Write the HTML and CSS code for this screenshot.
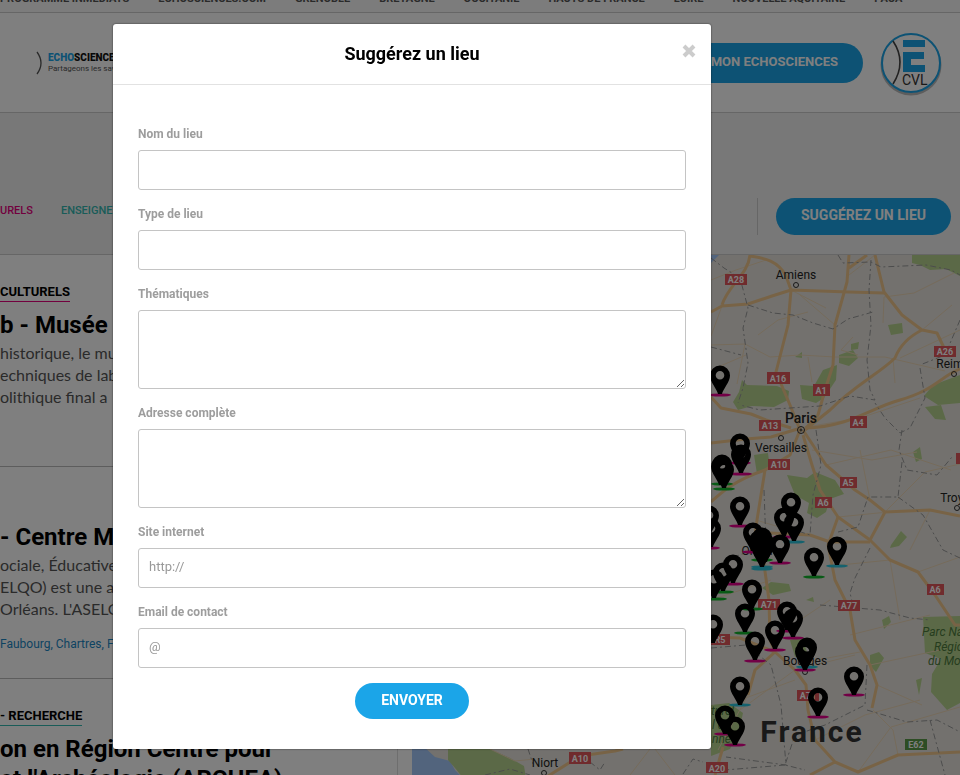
FILE: index.html
```
<!DOCTYPE html>
<html lang="fr">
<head>
    <meta charset="UTF-8">
    <meta name="viewport" content="width=device-width, initial-scale=1.0">
    <title>Echosciences - Suggérez un lieu</title>
    <link rel="stylesheet" href="styles.css">
</head>
<body>
    <div class="page">
        <nav class="topbar">
            <a href="#">PROGRAMME INMEDIATS</a>
            <a href="#">ECHOSCIENCES.COM</a>
            <a href="#">GRENOBLE</a>
            <a href="#">BRETAGNE</a>
            <a href="#">OCCITANIE</a>
            <a href="#">HAUTS DE FRANCE</a>
            <a href="#">LOIRE</a>
            <a href="#">NOUVELLE AQUITAINE</a>
            <a href="#">PACA</a>
        </nav>

        <header class="header">
            <a href="#" class="logo">
                <svg width="6" height="24" viewBox="0 0 6 24"><path d="M1 1Q9 12 1 23" fill="none" stroke="#555" stroke-width="1.3"/></svg>
                <span class="logo-text">
                    <strong><em>ECHO</em>SCIENCES</strong>
                    <small>Partageons les savoirs</small>
                </span>
            </a>
            <div class="header-actions">
                <button class="btn btn-account">MON ECHOSCIENCES</button>
                <svg class="badge-cvl" width="64" height="66" viewBox="0 0 64 66">
                    <circle cx="32" cy="35" r="29" fill="none" stroke="#777" stroke-width="3" opacity=".5"/>
                    <circle cx="32" cy="33" r="29" fill="#fff" stroke="#1ba5e8" stroke-width="2"/>
                    <path d="M14 11Q28 32 14 54" fill="none" stroke="#444" stroke-width="1.6"/>
                    <path d="M24 10h22v7H24zM24 22h21v7H32v6h14v7H24z" fill="#1ba5e8"/>
                    <text x="23" y="55" class="cvl">CVL</text>
                </svg>
            </div>
        </header>

        <div class="filters">
            <div class="filter-links">
                <a href="#" class="pink">URELS</a>
                <a href="#" class="teal">ENSEIGNEMENT</a>
            </div>
            <div class="filter-action">
                <button class="btn btn-suggest">SUGGÉREZ UN LIEU</button>
            </div>
        </div>

        <main class="content">
            <div class="list">
                <article class="place">
                    <a href="#" class="category pink-line">CULTURELS</a>
                    <h2>b - Musée d</h2>
                    <p>historique, le mu<br>echniques de lab<br>olithique final a</p>
                </article>
                <article class="place place-located">
                    <h2>- Centre Ma</h2>
                    <p>ociale, Éducative<br>ELQO) est une as<br>Orléans. L'ASELQ</p>
                    <a href="#" class="location">Faubourg, Chartres, F</a>
                </article>
                <article class="place">
                    <a href="#" class="category teal-line">- RECHERCHE</a>
                    <h2>on en Région Centre pour<br>et l'Archéologie (ARCHEA)</h2>
                </article>
            </div>
            <div class="map">
                <svg viewBox="412 255 548 520" preserveAspectRatio="xMinYMin slice">
                    <defs>
                        <path id="pin" fill-rule="evenodd" d="M-2 0C-3-5-10-12-10-18.5A10 10 0 0 1 10-18.5C10-12 3-5 2 0ZM0-23a4.3 4.3 0 1 0 0 8.6a4.3 4.3 0 1 0 0-8.6Z"/>
                        <ellipse id="dot" rx="11" ry="1.6"/>
                    </defs>

                    <rect x="412" y="255" width="548" height="520" fill="#e6e3dd"/>

                    <g class="water">
                        <path d="M412 745h10l13 12 15 4 5 9 8 8h-51z"/>
                        <path d="M711 255h8l-8 8z"/>
                    </g>

                    <g class="park">
                        <path d="M448 749h42l20 9 14 8 2 12h-63l-8-10-7-8z"/>
                        <path d="M912 255h48v21l-14-7-16 1-10-5-8-2z"/>
                        <path d="M739 392l3-12 5 5 30 1 12 5-1 9-14 7-22-1-14 4-5-8z"/>
                        <path d="M800 385l14 1 9-16 14-5-1 15-12 18-8 5-14-4z"/>
                        <path d="M839 355l14-5 5 8-9 8-10-3zM851 344l8-2-1 7-7 1zM795 357l7-5v6z"/>
                        <path d="M933 385l27-10v28l-22 2-14-9zM925 407l16-2 5 15-11-1z"/>
                        <path d="M754 455l14-2 2 16-13 5zM787 475l20 3 8-6 20 8 9 14-14 5-4 13-9 6-10-5 2-10-14-8z"/>
                        <path d="M913 452l7-5 2 12-6 3zM888 325l14-2 1 10-12 2z"/>
                        <path d="M891 545l10-14 6 6-8 9-9 2zM762 588l9-6 18 2 2 7-18 4zM790 640l12-3 5 15-12 5z"/>
                        <path d="M923 617l37-1v87l-13 7-16-18 1-18 9-15-16-6z"/>
                        <path d="M711 705l18-2 14 10-4 18-9 18-19 7z"/>
                        <path d="M870 655l9-3 5 6-8 14-6-6zM882 620l7-4 2 6-7 7zM916 680l6-2-3 17zM806 600l7-3 1 5z"/>
                    </g>

                    <g class="lanes">
                        <path d="M711 345l34-1 25 13 30-2 35 2h50l60 14"/>
                        <path d="M722 306l-11 30M758 335l20-15 30-8M835 325l-35-30M884 297l-1 26M922 330l30-25M791 290l35 18M711 280l25-10 30-10M849 275l26-20M884 297l30-4 40-20"/>
                        <path d="M745 344l-8 40M808 357l4 25M893 358l2 25M858 355l-17-5 12-13M900 358l60-28M711 370l35-15"/>
                        <path d="M800 428l60-10 60-20M812 450l60 10 45-8M826 465l65-15 60 20M870 500l-10-50M885 512l40-40 35-8"/>
                        <path d="M756 520l50 15M740 480l-29 20M838 517l50-5M890 560l-50 5M918 572l42-15M890 560l10 60M930 510l-20 40"/>
                        <path d="M711 600l60-20M770 640l60-40M795 670l60-15M806 662l54-10M740 700l55-20M795 670l-55 40M815 740l50-25 55-15M748 695l-30 55"/>
                        <path d="M870 665l70-15M877 685l45 20M858 772l33-45 69-20M898 755l-5-25-20-20M930 615l-80 20"/>
                        <path d="M630 775l20-26M655 749l20 26M490 749l25 12 20-2"/>
                    </g>

                    <g class="roads">
                        <path d="M750 255c-2 20-22 30-28 50M711 312l11-6 26-2 24-8 19-6 58 2 35 1"/>
                        <path d="M750 256c15 2 28 5 36 20l5 14-3 35-12 47 14 33 10 25"/>
                        <path d="M849 255l-2 27-12 43-2 40-8 25-7 25-12 13M849 268l18-13"/>
                        <path d="M875 255l9 37 18 23 20 15 15 3 8 17M922 330q-20 10-27 28c-15 15-40 27-65 52l-25 20"/>
                        <path d="M960 369c-20 8-25 21-60 31-30 8-50 27-95 28M711 397l10 11 30 6 15 6 25 8"/>
                        <path d="M711 443l35-4 25-2 30-9M711 502c11-10 24-22 54-32l25-15 10-25M765 470l-8 50-4 30"/>
                        <path d="M803 435l9 30 8 25 18 27 32 23 20 20 28 12 17 23 10 15 10 15h10"/>
                        <path d="M803 430l23 35 29 25 15 10 15 12 45-2 30 6M885 512l-15 28M838 517l-10 28 7 35 15 30 5 30 15 25 7 20-5 23"/>
                        <path d="M770 533l40 2 20 7h40M762 550l7 50 1 40 5 12 20 18 11 15 2 25 7 30 20 22 23 10 40-17 62-3"/>
                        <path d="M775 652l-20 18-7 25M711 637l29 1 35 14M715 775l8-28M545 778l35-22 35-5 8-2M835 762l-25 13"/>
                    </g>

                    <g class="borders">
                        <path d="M711 258l13 10 16 10 8 30-5 20 5 35-3 15-2 10-5 15M748 305l25 8 20 2 20 8 20 6 15-10 25-7M838 255l5 8 28-1 10 5 45-2 25 5 9 5"/>
                        <path d="M871 260l-2 30 2 35-4 35 3 30 5 10-25-4-30 10-60 4-20-5M711 347l30 8M920 368l5 30-15 30-10 5-15-15-10-15M960 320l-15 35-25 10"/>
                        <path d="M902 430l-3 20 8 20 30 5 15-18M902 462l-4 35-30 0-10 30-20 5M898 497l25 18 20 35 17 8M816 430l5 35-8 30-3 40-30-10M764 490l2 55-40 15"/>
                        <path d="M870 548l-15 30-5 15 5 20M711 648l35-3 25 20 10 40 5 60-60-8M820 605l60 5 30 8 20 2M867 665l-2 40-40 20-30 10-10 30 20 5M867 710l40 12 30-2 25 13M785 765l-60 5M930 720l15 55"/>
                        <path d="M485 775l25-6 20 6M528 749l5 15M590 762l10 8 5-8M683 774l10-15 10 3"/>
                    </g>

                    <g class="shields">
                        <rect x="725" y="274" width="22" height="11"/><text x="736" y="283">A28</text>
                        <rect x="934" y="346" width="22" height="11"/><text x="945" y="355">A26</text>
                        <rect x="767" y="372" width="23" height="12"/><text x="778" y="382">A16</text>
                        <rect x="813" y="384" width="17" height="12"/><text x="821" y="394">A1</text>
                        <rect x="759" y="420" width="22" height="11"/><text x="770" y="429">A13</text>
                        <rect x="850" y="416" width="17" height="12"/><text x="858" y="426">A4</text>
                        <rect x="768" y="459" width="22" height="11"/><text x="779" y="468">A10</text>
                        <rect x="840" y="477" width="17" height="11"/><text x="848" y="486">A5</text>
                        <rect x="815" y="497" width="17" height="11"/><text x="823" y="506">A6</text>
                        <rect x="927" y="584" width="17" height="11"/><text x="935" y="593">A6</text>
                        <rect x="758" y="599" width="22" height="11"/><text x="769" y="608">A71</text>
                        <rect x="838" y="600" width="22" height="11"/><text x="849" y="609">A77</text>
                        <rect x="708" y="634" width="22" height="11"/><text x="720" y="643">R5</text>
                        <rect x="797" y="690" width="22" height="11"/><text x="808" y="699">A71</text>
                        <rect x="706" y="762" width="22" height="11"/><text x="717" y="772">A20</text>
                        <rect x="569" y="752" width="22" height="12"/><text x="580" y="762">A10</text>
                        <rect x="956" y="453" width="17" height="11"/>
                        <rect x="905" y="739" width="22" height="11" class="euro"/><text x="916" y="748">E62</text>
                    </g>

                    <g class="towns">
                        <circle cx="796" cy="285" r="2.5"/><text x="796" y="279">Amiens</text>
                        <circle cx="954" cy="374" r="2.5"/><text x="953" y="368">Reims</text>
                        <circle cx="781" cy="438" r="2.5"/><text x="781" y="452">Versailles</text>
                        <circle cx="957" cy="508" r="2.5"/><text x="958" y="502">Troyes</text>
                        <circle cx="805" cy="672" r="2.5"/><text x="805" y="665">Bourges</text>
                        <circle cx="544" cy="773" r="2.5"/><text x="545" y="767">Niort</text>
                        <text x="762" y="555">Orléans</text>
                        <circle cx="801" cy="430" r="3.5"/><circle cx="801" cy="430" r="1"/>
                        <text x="801" y="423" class="capital">Paris</text>
                        <text x="812" y="742" class="country">France</text>
                    </g>
                    <g class="park-names">
                        <text x="922" y="636">Parc Naturel</text>
                        <text x="934" y="651">Régional</text>
                        <text x="928" y="665">du Morvan</text>
                        <text x="711" y="715">turel</text>
                        <text x="712" y="729">l de</text>
                        <text x="712" y="743">nne</text>
                    </g>

                    <g class="pink-dot">
                        <use href="#dot" x="720" y="395"/><use href="#dot" x="740" y="463"/><use href="#dot" x="741" y="474"/>
                        <use href="#dot" x="740" y="526"/><use href="#dot" x="784" y="537"/><use href="#dot" x="753" y="552"/>
                        <use href="#dot" x="780" y="563"/><use href="#dot" x="733" y="584"/><use href="#dot" x="709" y="548"/>
                        <use href="#dot" x="787" y="631"/><use href="#dot" x="793" y="638"/><use href="#dot" x="775" y="650"/>
                        <use href="#dot" x="755" y="661"/><use href="#dot" x="805" y="670"/><use href="#dot" x="854" y="695"/>
                        <use href="#dot" x="818" y="717"/><use href="#dot" x="725" y="734"/><use href="#dot" x="735" y="745"/>
                    </g>
                    <g class="green-dot">
                        <use href="#dot" x="722" y="484"/><use href="#dot" x="724" y="489"/><use href="#dot" x="762" y="560"/>
                        <use href="#dot" x="814" y="577"/><use href="#dot" x="723" y="592"/><use href="#dot" x="716" y="599"/>
                        <use href="#dot" x="752" y="609"/><use href="#dot" x="745" y="633"/>
                    </g>
                    <g class="cyan-dot">
                        <use href="#dot" x="794" y="542"/><use href="#dot" x="837" y="566"/><use href="#dot" x="762" y="567"/>
                        <use href="#dot" x="762" y="569"/><use href="#dot" x="807" y="667"/><use href="#dot" x="740" y="705"/>
                    </g>
                    <g class="pins">
                        <use href="#pin" x="720" y="394"/><use href="#pin" x="740" y="462"/><use href="#pin" x="741" y="473"/>
                        <use href="#pin" x="722" y="483"/><use href="#pin" x="724" y="488"/><use href="#pin" x="721" y="485"/>
                        <use href="#pin" x="740" y="525"/><use href="#pin" x="791" y="521"/><use href="#pin" x="784" y="536"/>
                        <use href="#pin" x="794" y="541"/><use href="#pin" x="753" y="551"/><use href="#pin" x="762" y="556"/>
                        <use href="#pin" x="759" y="559"/><use href="#pin" x="765" y="562"/><use href="#pin" x="762" y="567"/>
                        <use href="#pin" x="780" y="563"/><use href="#pin" x="814" y="576"/><use href="#pin" x="837" y="565"/>
                        <use href="#pin" x="733" y="583"/><use href="#pin" x="723" y="591"/><use href="#pin" x="714" y="598"/>
                        <use href="#pin" x="709" y="534"/><use href="#pin" x="711" y="547"/><use href="#pin" x="752" y="608"/>
                        <use href="#pin" x="745" y="632"/><use href="#pin" x="787" y="630"/><use href="#pin" x="793" y="637"/>
                        <use href="#pin" x="775" y="649"/><use href="#pin" x="755" y="660"/><use href="#pin" x="713" y="643"/>
                        <use href="#pin" x="807" y="666"/><use href="#pin" x="805" y="670"/><use href="#pin" x="854" y="695"/>
                        <use href="#pin" x="740" y="705"/><use href="#pin" x="818" y="716"/><use href="#pin" x="725" y="734"/>
                        <use href="#pin" x="735" y="745"/>
                    </g>
                </svg>
            </div>
        </main>
    </div>

    <div class="overlay">
        <div class="modal" role="dialog" aria-labelledby="modal-title">
            <div class="modal-header">
                <h1 id="modal-title">Suggérez un lieu</h1>
                <button class="close" aria-label="Fermer">
                    <svg width="14" height="14" viewBox="0 0 14 14"><path d="M2 2l10 10M12 2l-10 10" stroke="#ccc" stroke-width="4"/></svg>
                </button>
            </div>
            <form class="modal-body">
                <div class="form-group">
                    <label for="name">Nom du lieu</label>
                    <input type="text" id="name">
                </div>
                <div class="form-group">
                    <label for="type">Type de lieu</label>
                    <input type="text" id="type">
                </div>
                <div class="form-group">
                    <label for="themes">Thématiques</label>
                    <textarea id="themes"></textarea>
                </div>
                <div class="form-group">
                    <label for="address">Adresse complète</label>
                    <textarea id="address"></textarea>
                </div>
                <div class="form-group">
                    <label for="website">Site internet</label>
                    <input type="text" id="website" placeholder="http://">
                </div>
                <div class="form-group">
                    <label for="email">Email de contact</label>
                    <input type="text" id="email" placeholder="@">
                </div>
                <button type="submit" class="btn btn-send">ENVOYER</button>
            </form>
        </div>
    </div>
</body>
</html>
```
FILE: styles.css
```
* {
    box-sizing: border-box;
}
body {
    margin: 0;
    font-family: Roboto, "Liberation Sans", sans-serif;
    color: #000;
    background: #fff;
    overflow: hidden;
}
a {
    text-decoration: none;
}
.page {
    display: flex;
    flex-direction: column;
    height: 100vh;
}

/* top navigation */
.topbar {
    display: flex;
    flex-shrink: 0;
    align-items: flex-end;
    gap: 29px;
    height: 13px;
    padding-bottom: 3px;
    border-bottom: 1px solid #ccc;
    background: #f8f8f8;
    overflow: hidden;
}
.topbar a {
    font-size: 11px;
    font-weight: bold;
    line-height: 20px;
    color: #555;
    white-space: nowrap;
}
.header {
    display: flex;
    flex-shrink: 0;
    align-items: center;
    justify-content: space-between;
    height: 100px;
    padding: 0 17px 0 36px;
    border-bottom: 1px solid #ccc;
}
.logo {
    display: flex;
    align-items: center;
    gap: 6px;
    color: #111;
}
.logo-text {
    display: flex;
    flex-direction: column;
}
.logo strong {
    font-size: 10px;
    font-weight: 900;
    line-height: 12px;
}
.logo em {
    font-style: normal;
    color: #1ba5e8;
}
.logo small {
    font-size: 8px;
    line-height: 10px;
    color: #555;
}
.header-actions {
    display: flex;
    align-items: center;
    gap: 16px;
}
.cvl {
    font-size: 14px;
    fill: #333;
}

/* buttons */
.btn {
    font-family: inherit;
    font-weight: bold;
    color: #fff;
    background: #1ba5e8;
    border: none;
    border-radius: 20px;
    cursor: pointer;
    white-space: nowrap;
}
.btn-account {
    height: 40px;
    padding: 0 25px 2px;
    font-size: 13px;
}
.btn-suggest {
    height: 37px;
    padding: 0 25px 3px;
    font-size: 14px;
}
.btn-send {
    display: block;
    height: 36px;
    margin: 15px auto 0;
    padding: 0 26px 2px;
    font-size: 14px;
}

/* filters */
.filters {
    display: flex;
    flex-shrink: 0;
    justify-content: space-between;
    align-items: flex-end;
    height: 142px;
    padding: 0 9px 19px 0;
    border-bottom: 1px solid #ccc;
    background: #f1f1f1;
}
.filter-links {
    display: flex;
    gap: 28px;
    padding-bottom: 14px;
    font-size: 11px;
    font-weight: 500;
    line-height: 20px;
}
.pink {
    color: #e5007d;
}
.teal {
    color: #33b8b0;
}
.filter-action {
    padding-left: 18px;
    border-left: 1px solid #ccc;
}

/* list of places */
.content {
    display: flex;
    flex: 1;
    min-height: 0;
    overflow: hidden;
}
.list {
    width: 398px;
    flex-shrink: 0;
    border-right: 1px solid #ddd;
    white-space: nowrap;
}
.place {
    min-height: 212px;
    padding: 26px 0 20px;
    border-bottom: 1px solid #bbb;
}
.place-located {
    padding-top: 55px;
}
.category {
    display: inline-block;
    font-size: 13px;
    font-weight: bold;
    line-height: 18px;
    color: #000;
    border-bottom: 1px solid;
}
.pink-line {
    border-color: #e5007d;
}
.teal-line {
    border-color: #33b8b0;
}
.place h2 {
    margin: 8px 0 2px;
    font-size: 24px;
    line-height: 30px;
}
.place-located h2 {
    margin-top: 0;
}
.place p {
    margin: 0;
    font-family: Lato, sans-serif;
    font-size: 16px;
    line-height: 22px;
    color: #555;
}
.location {
    display: block;
    margin-top: 14px;
    font-size: 12px;
    line-height: 20px;
    color: #1b87c4;
}

/* map */
.map {
    flex: 1;
    margin-left: 14px;
}
.map svg {
    display: block;
    width: 100%;
    height: 100%;
}
.water {
    fill: #a4c8fa;
}
.park {
    fill: #b7d38e;
}
.lanes path {
    fill: none;
    stroke: #ecd6b6;
    stroke-width: 1;
}
.roads path {
    fill: none;
    stroke: #f0c78c;
    stroke-width: 3;
    stroke-linejoin: round;
}
.borders path {
    fill: none;
    stroke: #999;
    stroke-dasharray: 6 3 2 3;
}
.shields rect {
    fill: #e0565b;
}
.shields .euro {
    fill: #5b9a48;
}
.shields text {
    font-size: 9px;
    font-weight: bold;
    fill: #fff;
    text-anchor: middle;
}
.towns circle {
    fill: none;
    stroke: #333;
}
.towns text {
    font-size: 12px;
    fill: #222;
    text-anchor: middle;
}
.towns .capital {
    font-size: 14px;
    font-weight: 500;
}
.towns .country {
    font-size: 30px;
    font-weight: bold;
    fill: #333;
    letter-spacing: 2px;
}
.park-names text {
    font-size: 12px;
    font-style: italic;
    fill: #4c7a3c;
}
.pink-dot {
    fill: #e5008d;
}
.green-dot {
    fill: #12b52c;
}
.cyan-dot {
    fill: #2cc4dc;
}

/* modal */
.overlay {
    position: fixed;
    inset: 0;
    padding: 24px 24px 24px 113px;
    background: rgba(0, 0, 0, 0.5);
    overflow: auto;
}
.modal {
    max-width: 598px;
    background: #fff;
    border-radius: 3px;
    box-shadow: 0 0 2px rgba(0, 0, 0, 0.7);
}
.modal-header {
    position: relative;
    height: 61px;
    border-bottom: 1px solid #e2e2e2;
    text-align: center;
}
.modal-header h1 {
    margin: 0;
    font-size: 18px;
    line-height: 60px;
}
.close {
    position: absolute;
    top: 20px;
    right: 15px;
    display: flex;
    padding: 0;
    border: none;
    background: none;
    cursor: pointer;
}
.modal-body {
    padding: 39px 25px 30px;
}
.form-group {
    margin-bottom: 14px;
}
.form-group label {
    display: block;
    margin-bottom: 6px;
    font-size: 12px;
    font-weight: bold;
    line-height: 20px;
    color: #9d9d9d;
}
.form-group input,
.form-group textarea {
    display: block;
    width: 100%;
    height: 40px;
    padding: 0 10px 3px;
    font-family: inherit;
    font-size: 13px;
    color: #555;
    background: #fff;
    border: 1px solid #c4c4c4;
    border-radius: 3px;
}
.form-group textarea {
    height: 79px;
    resize: vertical;
}
.form-group input::placeholder {
    color: #999;
}
```
